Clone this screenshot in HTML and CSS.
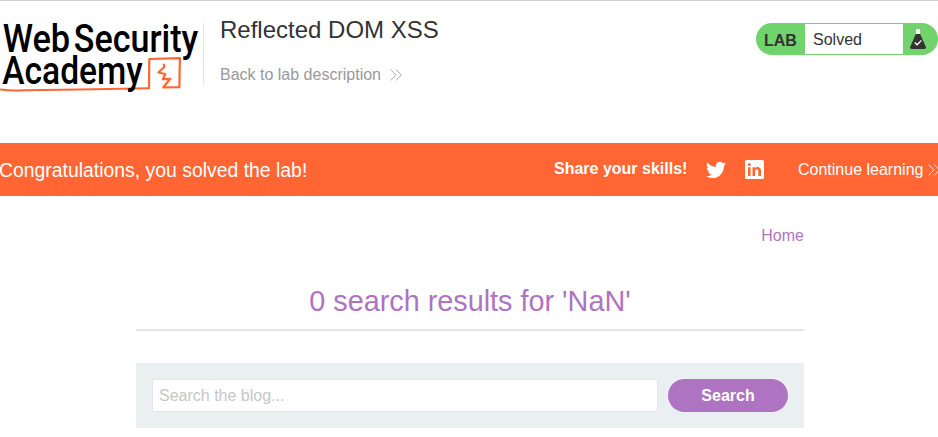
FILE: index.html
```html
<!DOCTYPE html>
<html lang="en">
<head>
<meta charset="utf-8">
<title>Reflected DOM XSS</title>
<link rel="stylesheet" href="styles.css">
</head>
<body>
<header class="header">
  <svg class="logo" width="203" height="100" viewBox="0 0 203 100" role="img" aria-label="Web Security Academy">
    <g fill="none" stroke="#ff6633" stroke-linejoin="round" stroke-linecap="round">
      <path stroke-width="2" d="M1 89.5Q10 91 24 90.2L80 89.6L149 88.2"/>
      <path stroke-width="2.2" d="M149 88L149.3 59L180 58.2L179.6 71L179.4 87.2L163.5 87.5"/>
      <path stroke-width="2.2" d="M163.8 64.5L164.3 67L158.5 72.5L165.3 74L162.8 79.2L170.3 78.8L163.5 87"/>
    </g>
    <g class="logo-text">
      <text x="2.7" y="52" textLength="67.5" lengthAdjust="spacingAndGlyphs">Web</text>
      <text x="73.8" y="52" textLength="124.5" lengthAdjust="spacingAndGlyphs">Security</text>
      <text x="2.3" y="84.4" textLength="140.5" lengthAdjust="spacingAndGlyphs">Academy</text>
    </g>
  </svg>
  <div class="title-block">
    <h1>Reflected DOM XSS</h1>
    <a class="back">Back to lab description
      <svg width="12" height="12" viewBox="0 0 12 12"><path d="M.7.5L5.8 6L.7 11.5M6.2.5L11.3 6L6.2 11.5"/></svg>
    </a>
  </div>
  <div class="status">
    <b class="status-label">LAB</b>
    <span class="status-value">Solved</span>
    <span class="status-icon">
      <svg width="16" height="20" viewBox="0 0 16 20">
        <path fill="#fff" d="M5 0h6v2h-1v4H6V2H5z"/>
        <path fill="#333" fill-opacity=".6" d="M5 0h1v1.500H5zM10 0h1v1.500h-1z"/>
        <path fill="#333" d="M5.800 5h4.400L16 18.200Q16.100 20 14.500 20h-13Q-.1 20 0 18.200z"/>
        <path fill="none" stroke="#fff" stroke-width="1.300" d="M4.700 13.500l2.400 2.300 4.300-4.400"/>
      </svg>
    </span>
  </div>
</header>
<section class="banner">
  <p class="congrats">Congratulations, you solved the lab!</p>
  <b class="share">Share your skills!</b>
  <svg class="twitter" width="20" height="18" viewBox="0 2 24 20"><path fill="#fff" d="M24 4.600a10 10 0 0 1-2.800.8 5 5 0 0 0 2.200-2.700c-1 .5-2 1-3.100 1.200a4.900 4.900 0 0 0-8.400 4.500A14 14 0 0 1 1.700 3.100a4.900 4.900 0 0 0 1.500 6.600 5 5 0 0 1-2.200-.6v.1a4.900 4.900 0 0 0 3.900 4.800 5 5 0 0 1-2.200.1 4.900 4.900 0 0 0 4.600 3.400A9.900 9.900 0 0 1 0 19.500a14 14 0 0 0 7.500 2.200c9.100 0 14-7.500 14-14v-.6A10 10 0 0 0 24 4.600z"/></svg>
  <svg class="linkedin" width="19" height="19" viewBox="0 0 19 19"><rect width="19" height="19" rx="1.600" fill="#fff"/><path fill="#ff6633" d="M3 7.200h2.600V16H3zM7.500 7.200H10v1.200c1.600-2.300 6-1.700 6 2.400V16h-2.700v-4.600c0-3-3.200-2.500-3.200 0V16H7.500z"/><circle cx="4.300" cy="4.400" r="1.500" fill="#ff6633"/></svg>
  <a class="continue">Continue learning<svg width="12" height="12" viewBox="0 0 12 12"><path d="M.7.5L5.800 6L.7 11.500M6.200.5L11.300 6L6.200 11.500"/></svg></a>
</section>
<main class="content">
  <nav class="nav"><a>Home</a></nav>
  <h2>0 search results for 'NaN'</h2>
  <form class="search">
    <input type="text" placeholder="Search the blog...">
    <button type="button">Search</button>
  </form>
</main>
</body>
</html>
```
FILE: styles.css
```css
* { box-sizing: border-box; }
body {
  margin: 0;
  background: #fff;
  color: #333;
  font: 16px/20px "Liberation Sans", Arial, sans-serif;
  overflow: hidden;
}
svg { display: block; flex: none; }
h1, h2, p { margin: 0; font-weight: 400; }
.header {
  display: flex;
  align-items: flex-start;
  height: 143px;
  border-top: 1px solid #ccc;
}
.logo { margin-top: -1px; }
.logo-text { font: 500 38px Roboto, sans-serif; fill: #000; }
.title-block {
  height: 62px;
  margin-top: 22px;
  padding-left: 16px;
  border-left: 1px solid #e5e5e5;
}
h1 { margin-top: -8px; font-size: 24px; line-height: 30px; white-space: nowrap; }
.back {
  display: flex;
  align-items: center;
  gap: 9px;
  margin-top: 20px;
  color: #999;
  white-space: nowrap;
}
.back svg { fill: none; stroke: #aaa; }
.status { display: flex; width: 182px; height: 32px; margin: 22px 0 0 auto; border-radius: 16px; overflow: hidden; background: #70d36c; }
.status-label { width: 49px; padding-left: 8px; line-height: 35px; }
.status-value { width: 98px; height: 30px; margin-top: 1px; padding-left: 8px; background: #fff; line-height: 31px; }
.status-icon { padding: 6px 0 0 7px; }
.banner {
  display: flex;
  align-items: center;
  height: 53px;
  background: #ff6633;
  color: #fff;
  white-space: nowrap;
  overflow: hidden;
}
.banner > * { flex: none; }
.congrats { width: 555px; margin-left: -1px; font-size: 19.4px; }
.share { width: 152px; margin-top: -2px; }
.twitter { margin-right: 19px; }
.continue { display: flex; align-items: center; gap: 5px; margin-left: 34px; }
.continue svg { fill: none; stroke: #fff; stroke-width: .8; }
.content { width: 668px; margin: 0 0 0 136px; }
.nav { padding-top: 30px; text-align: right; color: #ae74c1; }
h2 {
  height: 85px;
  padding-top: 38px;
  border-bottom: 2px solid #e5e5e5;
  color: #ae74c1;
  font-size: 28.8px;
  line-height: 34px;
  text-align: center;
}
.search { display: flex; gap: 10px; height: 65px; margin-top: 32px; padding: 16px; background: #eaeff2; }
.search input {
  width: 506px;
  height: 33px;
  padding: 0 6px;
  border: 1px solid #e5e5e5;
  font: inherit;
}
.search input::placeholder { color: #c6c6c6; }
.search button {
  width: 120px;
  height: 33px;
  padding: 0;
  border: 0;
  border-radius: 17px;
  background: #ae74c1;
  color: #fff;
  font: bold 16px "Liberation Sans", Arial, sans-serif;
}
```
